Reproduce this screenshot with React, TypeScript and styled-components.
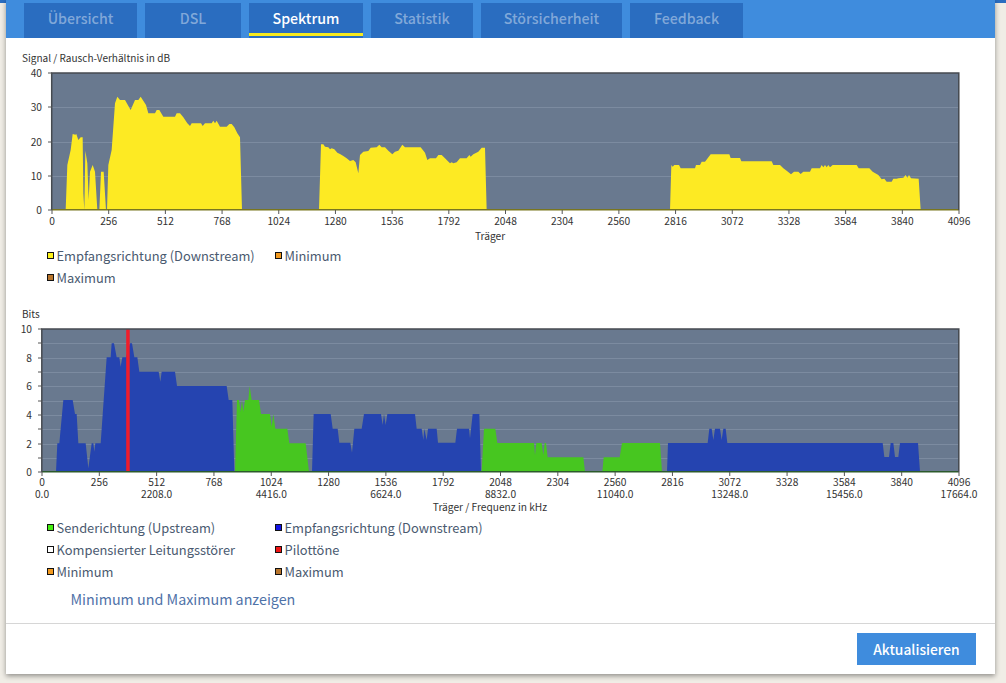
import React from "react";
import styled, { createGlobalStyle, css } from "styled-components";

const FONT = `"Noto Sans CJK SC", "Noto Sans", sans-serif`;

const Global = createGlobalStyle`
  html, body { margin: 0; padding: 0; overflow: hidden; }
  body { font-family: ${FONT}; }
`;

const Page = styled.div`
  height: 683px;
  padding: 0 11px 0 6px;
  box-sizing: border-box;
  background: linear-gradient(#2a6dc0 3px, #f0ede6 3px);
`;
const Card = styled.div`
  width: 989px;
  height: 674px;
  box-sizing: border-box;
  background: #fff;
  box-shadow: 0 2px 5px rgba(0, 0, 0, 0.4);
  display: flex;
  flex-direction: column;
`;
const TabBar = styled.nav`
  height: 38px;
  flex: none;
  box-sizing: border-box;
  padding: 3px 0 0 18px;
  background: #3f8cdd;
  display: flex;
  gap: 8px;
`;
const Tab = styled.div<{ $w: number; $active?: boolean }>`
  width: ${(p) => p.$w}px;
  height: 35px;
  box-sizing: border-box;
  background: #2a6dc0;
  color: ${(p) => (p.$active ? "#fff" : "rgba(255,255,255,0.42)")};
  font-size: 14.2px;
  font-weight: 500;
  line-height: 31px;
  text-align: center;
  position: relative;
  ${(p) =>
    p.$active &&
    css`
      &::after {
        content: "";
        position: absolute;
        left: 0;
        right: 0;
        bottom: 2px;
        height: 3px;
        background: #f7ea1e;
      }
    `}
`;
const Content = styled.main`
  flex: 1;
  padding-top: 13px;
`;
const ChartTitle = styled.div<{ $top?: number }>`
  font-size: 10.05px;
  line-height: 14px;
  height: 14px;
  color: #333;
  padding-left: 16px;
  margin-top: ${(p) => p.$top ?? 0}px;
`;
const ChartSvg = styled.svg`
  display: block;
`;
const AxisText = styled.text`
  font-family: ${FONT};
  font-size: 10.2px;
  fill: #333;
`;
const Legend = styled.ul`
  list-style: none;
  margin: 0;
  padding: 0 0 0 41px;
  width: 460px;
  display: flex;
  flex-wrap: wrap;
`;
const LegendItem = styled.li`
  width: 228px;
  height: 22px;
  display: flex;
  align-items: center;
  gap: 2.5px;
  font-size: 12.87px;
  line-height: 22px;
  color: #4a5a70;
`;
const Swatch = styled.i<{ $c: string }>`
  display: block;
  flex: none;
  width: 5px;
  height: 5px;
  margin-top: -1px;
  border: 1px solid #111;
  background: ${(p) => p.$c};
`;
const ToggleLink = styled.a`
  display: block;
  margin-top: 5px;
  padding-left: 64.5px;
  font-size: 14.3px;
  line-height: 22px;
  color: #4f72a8;
`;
const Footer = styled.footer`
  flex: none;
  height: 51px;
  box-sizing: border-box;
  border-top: 1px solid #d6d6d6;
  padding: 9px 19px 9px 0;
  display: flex;
  justify-content: flex-end;
`;
const Button = styled.button`
  width: 119px;
  height: 32px;
  border: 0;
  padding: 0;
  background: #3f8cdd;
  color: #fff;
  font-family: ${FONT};
  font-size: 13.8px;
  font-weight: 500;
`;

const z = (ox: number, oy: number, p: number[]) => {
  const out: string[] = [];
  for (let i = 0; i < p.length; i += 2) out.push(`${(ox + p[i] / 3).toFixed(2)},${(oy + p[i + 1] / 3).toFixed(2)}`);
  return out.join(" ");
};

const YELLOW = "#fdea23";
const BLUE = "#2544b0";
const GREEN = "#47c620";
const PLOT = "#69798f";
const GRID = "#7c8ba0";
const FRAME = "#454a50";

const snr: string[] = [
  z(0, 60, [197,450,202,315,212,270,218,222,226,224,229,222,235,240,242,232,248,232,250,400,253,450,256,272,262,310,266,420,270,335,278,315,285,335,292,450,298,450,303,335,311,335,318,450,321,450,325,315,335,270,345,130,352,110,360,120,375,120,392,150,405,120,415,120,422,110,438,135,445,160,465,160,470,150,478,150,490,170,525,170,530,160,540,160,550,172,562,190,570,198,575,190,603,190,608,198,615,190,635,190,640,182,645,190,650,182,660,200,680,200,688,192,695,192,703,202,712,220,720,232,726,450]),
  z(300, 130, [57,240,63,43,70,43,75,50,85,52,90,58,95,55,103,58,112,68,120,72,130,78,140,85,150,93,160,90,167,97,175,130,180,75,190,65,205,63,212,53,230,52,238,44,245,52,255,52,265,62,277,73,285,65,295,62,307,44,315,52,362,52,375,68,382,90,390,85,408,85,415,75,425,75,435,85,450,100,455,97,460,100,470,97,480,85,500,85,508,75,512,80,520,73,535,65,545,53,555,53,560,240]),
  z(640, 130, [90,240,94,105,98,110,103,105,117,105,122,115,165,115,168,105,180,105,185,95,195,95,212,73,268,73,272,84,300,84,304,94,395,94,400,105,420,105,430,115,440,122,453,133,462,125,475,125,482,132,490,125,510,125,515,115,540,115,545,105,550,112,555,105,560,112,565,105,570,112,578,105,650,105,656,115,688,115,698,125,715,135,725,148,733,146,740,155,755,155,760,146,770,146,775,145,790,143,797,135,802,143,807,135,813,145,836,146,842,240]),
];

const blue: string[] = [
  z(0, 300, [168,515,172,430,178,430,190,300,218,300,225,342,230,342,235,430,257,430,265,505,275,430,280,430,283,455,286,430,302,430,320,172,332,172,335,130,342,130,350,172,358,172,362,200,367,172,378,172,390,130,396,130,403,172,412,172,418,215,476,215,481,245,485,215,525,215,531,258,680,258,686,300,697,300,703,515]),
  z(220, 370, [276,305,281,132,332,132,338,176,353,176,358,218,391,218,396,248,403,176,425,176,432,132,483,132,488,165,492,132,497,165,502,132,585,132,590,176,605,176,610,210,613,176,620,210,624,176,650,176,654,218,706,218,711,176,747,176,750,205,758,132,778,132,783,305]),
  z(460, 400, [621,215,624,129,743,129,748,86,755,86,760,120,765,86,780,86,785,120,790,86,797,86,802,129,1100,129,1100,215]),
  z(700, 400, [300,215,300,129,548,129,553,171,567,171,572,129,580,129,585,171,595,171,600,129,654,129,660,215]),
];
const green: string[] = [
  z(0, 300, [705,515,711,300,717,300,722,335,726,300,730,335,735,300,745,300,749,258,755,300,777,300,783,342,810,342,815,380,820,342,826,386,862,386,868,430,917,430,927,515]),
  z(460, 400, [65,215,72,86,106,86,112,129,222,129,225,165,229,129,245,129,250,165,254,129,258,129,263,172,370,172,375,215]),
  z(460, 400, [427,215,431,172,479,172,486,129,600,129,606,215]),
];

const topX = (c: number) => 52 + (c * 907) / 4096;
const botX = (c: number) => 42 + (c * 917) / 4096;
const multiples = Array.from({ length: 17 }, (_, i) => i * 256);

const SnrChart = () => (
  <ChartSvg width={989} height={180} viewBox="6 65 989 180">
    <rect x={52} y={73} width={907} height={137} fill={PLOT} />
    {[107, 142, 176].map((y) => (
      <line key={y} x1={52} x2={959} y1={y + 0.5} y2={y + 0.5} stroke={GRID} />
    ))}
    {snr.map((p, i) => (
      <polygon key={i} points={p} fill={YELLOW} />
    ))}
    <line x1={52} x2={959} y1={209.7} y2={209.7} stroke="#79761f" strokeWidth={1.6} />
    <path d="M51.7 210V73H958.8V210" fill="none" stroke={FRAME} strokeWidth={1.5} />
    {[73, 107, 142, 176, 210].map((y, i) => (
      <g key={y}>
        <line x1={48} x2={52} y1={y} y2={y} stroke="#555" />
        <AxisText x={42} y={y + 4} textAnchor="end">{40 - i * 10}</AxisText>
      </g>
    ))}
    {multiples.map((c) => (
      <g key={c}>
        <line x1={topX(c)} x2={topX(c)} y1={210} y2={214} stroke="#555" />
        <AxisText x={topX(c)} y={225} textAnchor="middle">{c}</AxisText>
      </g>
    ))}
    <AxisText x={490} y={240} textAnchor="middle">Träger</AxisText>
  </ChartSvg>
);

const BitsChart = () => (
  <ChartSvg width={989} height={196} viewBox="6 321 989 196">
    <rect x={42} y={329} width={917} height={143} fill={PLOT} />
    {[343, 358, 372, 386, 401, 415, 429, 444, 458].map((y) => (
      <line key={y} x1={42} x2={959} y1={y + 0.5} y2={y + 0.5} stroke={GRID} />
    ))}
    {blue.map((p, i) => (
      <polygon key={i} points={p} fill={BLUE} />
    ))}
    {green.map((p, i) => (
      <polygon key={i} points={p} fill={GREEN} />
    ))}
    <rect x={126.2} y={329} width={3.5} height={143} fill="#f01c2a" />
    <line x1={42} x2={959} y1={471.7} y2={471.7} stroke="#2c5a2c" strokeWidth={1.6} />
    <path d="M41.8 472V329H958.8V472" fill="none" stroke={FRAME} strokeWidth={1.5} />
    {[329, 343, 358, 372, 386, 401, 415, 429, 444, 458, 472].map((y, i) => (
      <g key={y}>
        <line x1={38} x2={42} y1={y} y2={y} stroke="#555" />
        {i % 2 === 0 && <AxisText x={32} y={y + 4} textAnchor="end">{10 - i}</AxisText>}
      </g>
    ))}
    {multiples.map((c) => (
      <g key={c}>
        <line x1={botX(c)} x2={botX(c)} y1={472} y2={476} stroke="#555" />
        <AxisText x={botX(c)} y={486} textAnchor="middle">{c}</AxisText>
        {c % 512 === 0 && (
          <AxisText x={botX(c)} y={498} textAnchor="middle">{((c / 512) * 2208).toFixed(1)}</AxisText>
        )}
      </g>
    ))}
    <AxisText x={490} y={511} textAnchor="middle">Träger / Frequenz in kHz</AxisText>
  </ChartSvg>
);

const tabs: [string, number][] = [
  ["Übersicht", 113],
  ["DSL", 96],
  ["Spektrum", 114],
  ["Statistik", 102],
  ["Störsicherheit", 141],
  ["Feedback", 113],
];

const legendTop: [string, string][] = [
  ["#fdf21a", "Empfangsrichtung (Downstream)"],
  ["#f39a1f", "Minimum"],
  ["#b8752c", "Maximum"],
];
const legendBottom: [string, string][] = [
  ["#44ee11", "Senderichtung (Upstream)"],
  ["#1414e6", "Empfangsrichtung (Downstream)"],
  ["#ffffff", "Kompensierter Leitungsstörer"],
  ["#f01414", "Pilottöne"],
  ["#f39a1f", "Minimum"],
  ["#b8752c", "Maximum"],
];

const LegendList = ({ items }: { items: [string, string][] }) => (
  <Legend>
    {items.map(([c, t]) => (
      <LegendItem key={t}>
        <Swatch $c={c} />
        {t}
      </LegendItem>
    ))}
  </Legend>
);

export default function App() {
  return (
    <Page>
      <Global />
      <Card>
        <TabBar>
          {tabs.map(([t, w]) => (
            <Tab key={t} $w={w} $active={t === "Spektrum"}>
              {t}
            </Tab>
          ))}
        </TabBar>
        <Content>
          <ChartTitle>Signal / Rausch-Verhältnis in dB</ChartTitle>
          <SnrChart />
          <LegendList items={legendTop} />
          <ChartTitle $top={18}>Bits</ChartTitle>
          <BitsChart />
          <LegendList items={legendBottom} />
          <ToggleLink>Minimum und Maximum anzeigen</ToggleLink>
        </Content>
        <Footer>
          <Button>Aktualisieren</Button>
        </Footer>
      </Card>
    </Page>
  );
}
